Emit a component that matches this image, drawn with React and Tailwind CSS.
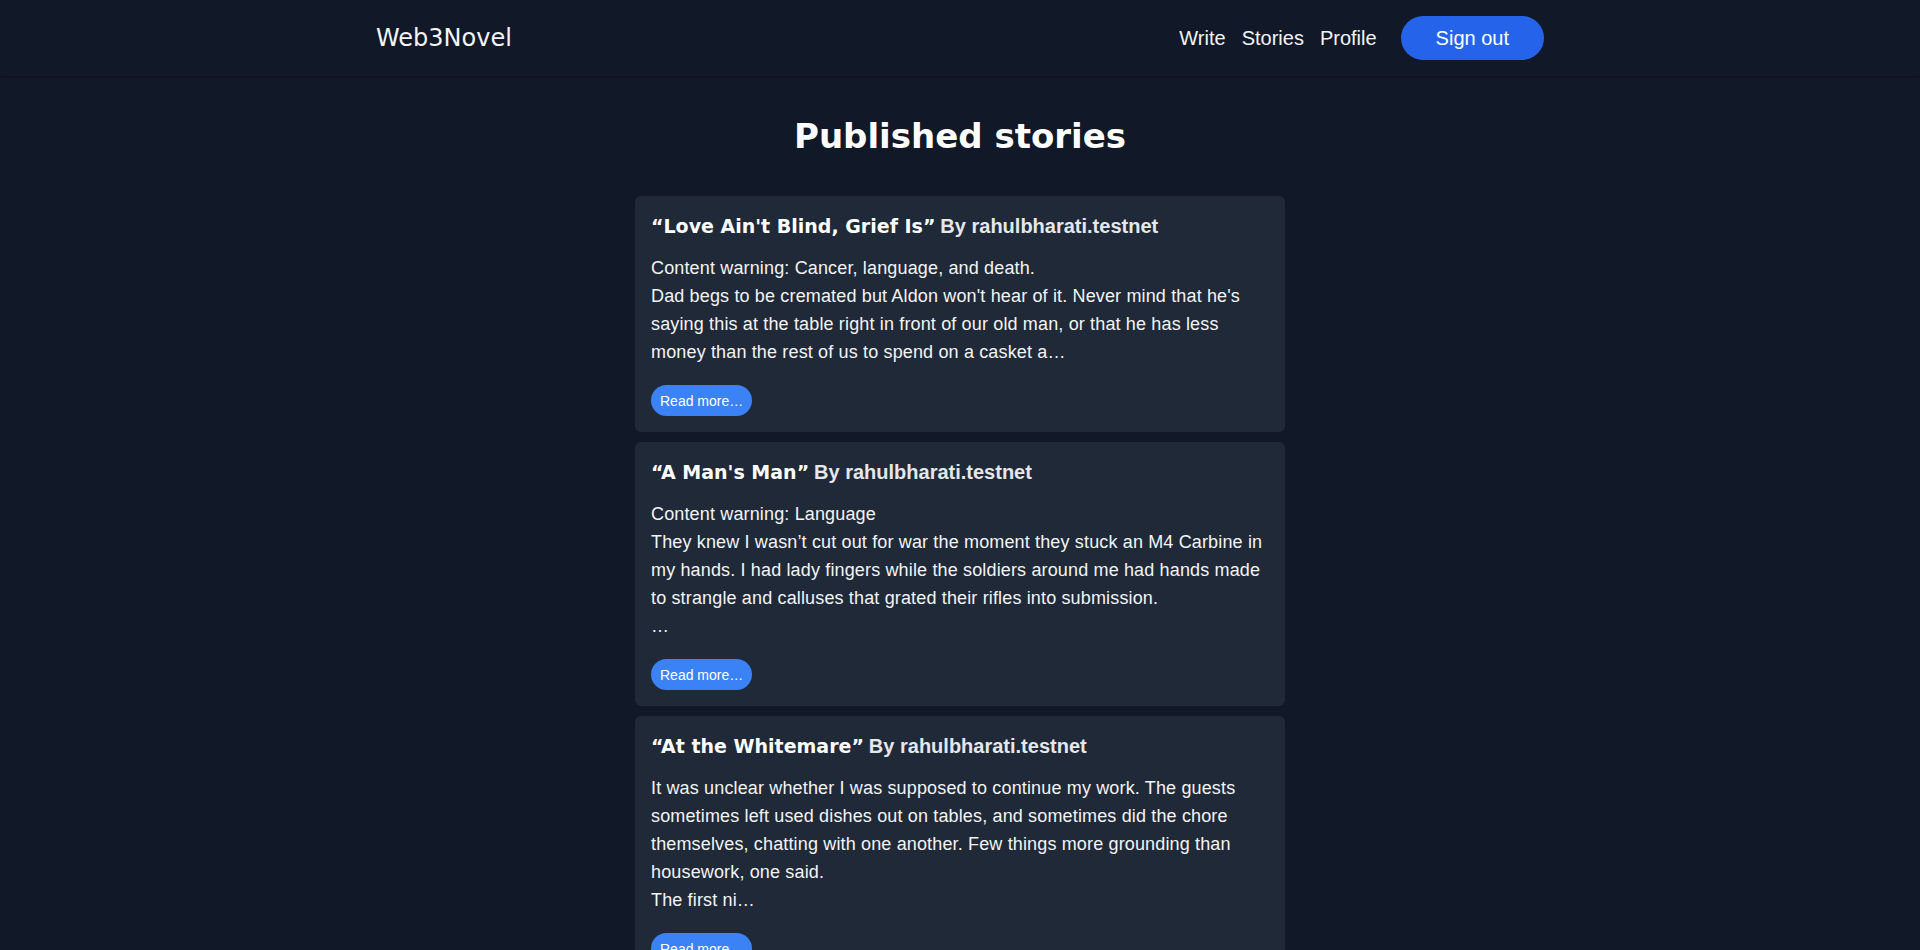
const stories = [
  {
    title: "Love Ain't Blind, Grief Is",
    author: 'rahulbharati.testnet',
    excerpt:
      "Content warning: Cancer, language, and death.\nDad begs to be cremated but Aldon won't hear of it. Never mind that he's saying this at the table right in front of our old man, or that he has less money than the rest of us to spend on a casket a…",
  },
  {
    title: "A Man's Man",
    author: 'rahulbharati.testnet',
    excerpt:
      'Content warning: Language\nThey knew I wasn’t cut out for war the moment they stuck an M4 Carbine in my hands. I had lady fingers while the soldiers around me had hands made to strangle and calluses that grated their rifles into submission.\n…',
  },
  {
    title: 'At the Whitemare',
    author: 'rahulbharati.testnet',
    excerpt:
      'It was unclear whether I was supposed to continue my work. The guests sometimes left used dishes out on tables, and sometimes did the chore themselves, chatting with one another. Few things more grounding than housework, one said.\nThe first ni…',
  },
]

const heading = "font-['DejaVu_Sans',sans-serif]"
const body = "font-['Liberation_Sans',Arial,sans-serif]"

function StoryCard({ story }) {
  return (
    <div className="w-[650px] rounded-md bg-[#1f2937] p-4">
      <h2 className="text-[19px] leading-7 font-bold text-white">
        <span className={heading}>“{story.title}”</span>{' '}
        <span className={`${body} text-xl text-[#e5e7eb]`}>By {story.author}</span>
      </h2>
      <p className={`${body} mt-[14px] mb-[19px] text-lg leading-7 tracking-[0.15px] text-[#f3f4f6] whitespace-pre-line`}>
        {story.excerpt}
      </p>
      <button className={`${body} flex h-[31px] items-center rounded-full bg-[#3b82f6] px-[9px] text-sm text-white`}>
        Read more…
      </button>
    </div>
  )
}

export default function App() {
  return (
    <div className="min-h-screen bg-[#111827]">
      {/* Header */}
      <header className="shadow-[0_1px_2px_rgba(0,0,0,0.35)]">
        <div className="mx-auto flex max-w-[1200px] items-center justify-between px-4 py-4">
          <a className={`${heading} text-2xl text-[#f3f4f6]`}>Web3Novel</a>
          <nav className={`${body} flex items-center text-xl text-[#f3f4f6]`}>
            <div className="flex items-center gap-4">
              <a>Write</a>
              <a>Stories</a>
              <a>Profile</a>
            </div>
            <button className="ml-6 rounded-full bg-[#2563eb] px-[35px] py-2 text-xl leading-7 text-white">
              Sign out
            </button>
          </nav>
        </div>
      </header>

      <main className="flex flex-col items-center pt-10 pb-10">
        <h1 className={`${heading} mb-10 text-[34px] leading-10 font-bold text-white`}>
          Published stories
        </h1>
        <div className="flex flex-col gap-2.5">
          {stories.map((s) => (
            <StoryCard key={s.title} story={s} />
          ))}
        </div>
      </main>
    </div>
  )
}
